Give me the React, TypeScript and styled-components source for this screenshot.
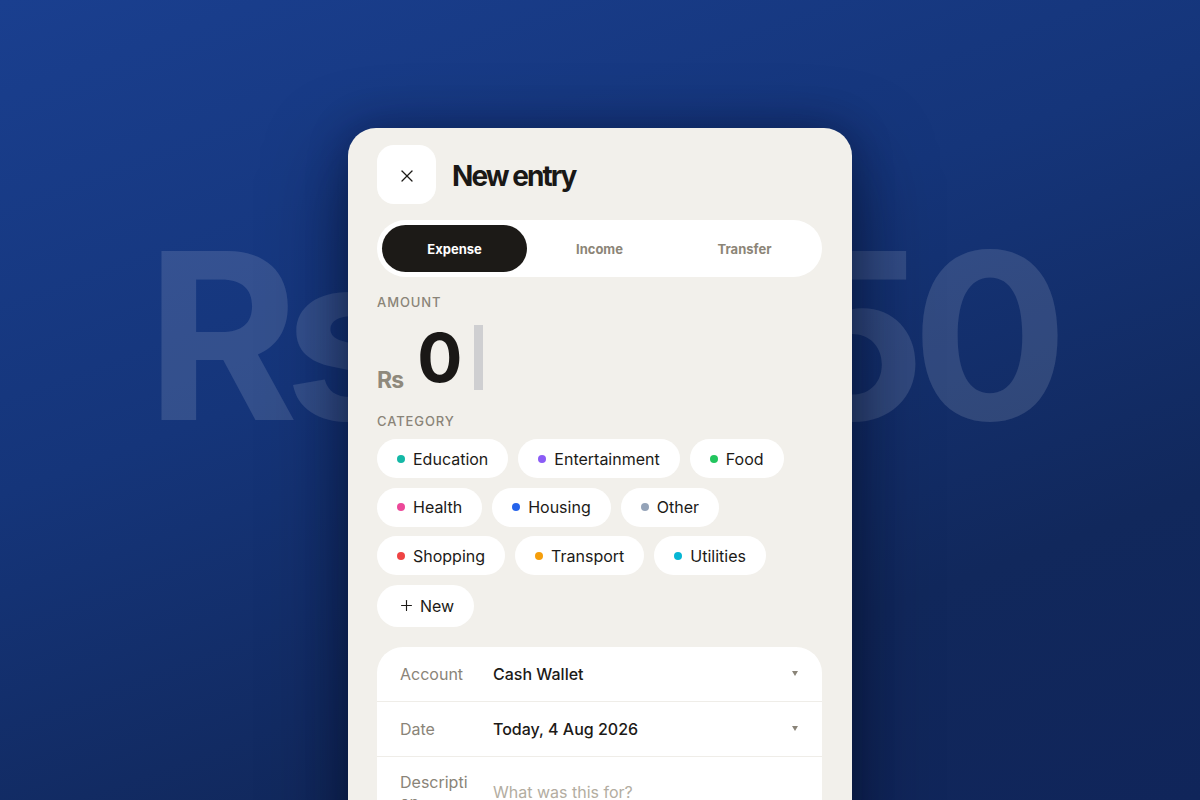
import React from 'react';
import styled, { createGlobalStyle } from 'styled-components';
import { X, Plus } from 'lucide-react';

const GlobalStyle = createGlobalStyle`
  html, body {
    margin: 0;
    padding: 0;
    height: 100%;
  }
  body {
    font-family: 'Inter', 'Noto Sans', sans-serif;
    overflow: hidden;
  }
  #root {
    height: 100%;
  }
`;

const Stage = styled.div`
  position: relative;
  width: 100%;
  height: 100vh;
  overflow: hidden;
  background: linear-gradient(160deg, #1a3f8f 0%, #15357a 40%, #11285c 75%, #10255a 100%);
  display: flex;
  justify-content: center;
  align-items: flex-start;
`;

const Watermark = styled.div`
  position: absolute;
  top: 220px;
  left: 0;
  right: 0;
  text-align: center;
  font-family: 'Inter', sans-serif;
  font-weight: 700;
  font-size: 232px;
  line-height: 1;
  letter-spacing: -0.062em;
  color: rgba(255, 255, 255, 0.13);
  white-space: nowrap;
  pointer-events: none;
`;

const Sheet = styled.div`
  position: relative;
  z-index: 1;
  margin-top: 128px;
  width: 504px;
  height: 720px;
  box-sizing: border-box;
  padding: 17px 30px 0 29px;
  background: #f2f0eb;
  border-radius: 28px 28px 0 0;
  box-shadow: 0 30px 80px rgba(3, 10, 30, 0.55), 0 0 40px rgba(3, 10, 30, 0.3);
  display: flex;
  flex-direction: column;
`;

const Header = styled.div`
  display: flex;
  align-items: center;
  gap: 16px;
`;

const CloseButton = styled.button`
  width: 59px;
  height: 59px;
  border: none;
  border-radius: 17px;
  background: #ffffff;
  display: flex;
  align-items: center;
  justify-content: center;
  color: #1c1a17;
  padding: 2px 0 0;
  cursor: pointer;
`;

const Title = styled.h1`
  margin: 2px 0 0;
  font-size: 28px;
  font-weight: 700;
  letter-spacing: -0.07em;
  color: #1a1816;
`;

const Segmented = styled.div`
  margin-top: 16px;
  height: 57px;
  box-sizing: border-box;
  padding: 5px;
  background: #ffffff;
  border-radius: 999px;
  display: flex;
`;

const Tab = styled.button<{ $active?: boolean }>`
  flex: 1;
  border: none;
  border-radius: 999px;
  background: ${p => (p.$active ? '#1c1a17' : 'transparent')};
  color: ${p => (p.$active ? '#ffffff' : '#8c8577')};
  font-family: 'Inter', sans-serif;
  font-size: 13px;
  font-weight: 700;
  cursor: pointer;
`;

const SectionLabel = styled.div<{ $top: number }>`
  margin-top: ${p => p.$top}px;
  font-size: 13px;
  font-weight: 500;
  letter-spacing: 0.07em;
  color: #8a8478;
`;

const AmountRow = styled.div`
  margin-top: 14px;
  display: flex;
  align-items: flex-end;
  height: 66px;
`;

const Currency = styled.span`
  font-size: 23px;
  font-weight: 700;
  letter-spacing: -0.04em;
  color: #8f897c;
  line-height: 1;
  margin-bottom: -2px;
`;

const AmountValue = styled.span`
  font-size: 67px;
  font-weight: 700;
  color: #1a1816;
  line-height: 1;
  margin-left: 14px;
  align-self: flex-start;
`;

const Caret = styled.span`
  width: 9px;
  height: 65px;
  background: #cfcfd1;
  margin-left: 12px;
  align-self: center;
`;

const Chips = styled.div`
  margin-top: 10px;
  display: flex;
  flex-wrap: wrap;
  column-gap: 10px;
  row-gap: 9.5px;
`;

const Chip = styled.button`
  height: 39px;
  box-sizing: border-box;
  padding: 0 20px;
  border: none;
  border-radius: 999px;
  background: #ffffff;
  display: flex;
  align-items: center;
  gap: 8px;
  font-family: 'Inter', sans-serif;
  font-size: 16px;
  color: #1c1a17;
  cursor: pointer;
`;

const NewChip = styled(Chip)`
  height: 42px;
  gap: 5px;
  padding: 0 20px 0 21px;
`;

const Dot = styled.span<{ $color: string }>`
  width: 8px;
  height: 8px;
  border-radius: 50%;
  background: ${p => p.$color};
`;

const FormCard = styled.div`
  margin-top: 20px;
  background: #ffffff;
  border-radius: 26px;
  overflow: hidden;
`;

const FormRow = styled.div<{ $tall?: boolean }>`
  display: flex;
  align-items: center;
  height: ${p => (p.$tall ? '70px' : '54px')};
  padding: 0 22px 0 23px;
  border-top: 1px solid #efede8;
  &:first-child {
    border-top: none;
  }
`;

const FieldLabel = styled.div`
  width: 72px;
  flex-shrink: 0;
  margin-right: 21px;
  font-size: 16px;
  line-height: 20px;
  color: #8a8478;
  overflow-wrap: anywhere;
`;

const FieldValue = styled.div<{ $placeholder?: boolean }>`
  flex: 1;
  font-size: 16px;
  font-weight: ${p => (p.$placeholder ? 400 : 500)};
  color: ${p => (p.$placeholder ? '#b3ada1' : '#1c1a17')};
`;

const Chevron = styled.span`
  width: 0;
  height: 0;
  margin-right: 2px;
  border-left: 3px solid transparent;
  border-right: 3px solid transparent;
  border-top: 5px solid #8a8478;
`;

const categories = [
  { name: 'Education', color: '#14b8a6' },
  { name: 'Entertainment', color: '#8b5cf6' },
  { name: 'Food', color: '#22c55e' },
  { name: 'Health', color: '#ec4899' },
  { name: 'Housing', color: '#2563eb' },
  { name: 'Other', color: '#94a3b8' },
  { name: 'Shopping', color: '#ef4444' },
  { name: 'Transport', color: '#f59e0b' },
  { name: 'Utilities', color: '#06b6d4' },
];

export default function App() {
  return (
    <>
      <GlobalStyle />
      <Stage>
        <Watermark>Rs 2,450</Watermark>
        <Sheet>
          <Header>
            <CloseButton aria-label="Close">
              <X size={20} strokeWidth={1.5} />
            </CloseButton>
            <Title>New entry</Title>
          </Header>

          <Segmented>
            <Tab $active>Expense</Tab>
            <Tab>Income</Tab>
            <Tab>Transfer</Tab>
          </Segmented>

          <SectionLabel $top={17}>AMOUNT</SectionLabel>
          <AmountRow>
            <Currency>Rs</Currency>
            <AmountValue>0</AmountValue>
            <Caret />
          </AmountRow>

          <SectionLabel $top={23}>CATEGORY</SectionLabel>
          <Chips>
            {categories.map(c => (
              <Chip key={c.name}>
                <Dot $color={c.color} />
                {c.name}
              </Chip>
            ))}
            <NewChip>
              <Plus size={17} strokeWidth={1.6} />
              New
            </NewChip>
          </Chips>

          <FormCard>
            <FormRow>
              <FieldLabel>Account</FieldLabel>
              <FieldValue>Cash Wallet</FieldValue>
              <Chevron />
            </FormRow>
            <FormRow>
              <FieldLabel>Date</FieldLabel>
              <FieldValue>Today, 4 Aug 2026</FieldValue>
              <Chevron />
            </FormRow>
            <FormRow $tall>
              <FieldLabel>Description</FieldLabel>
              <FieldValue $placeholder>What was this for?</FieldValue>
            </FormRow>
          </FormCard>
        </Sheet>
      </Stage>
    </>
  );
}
